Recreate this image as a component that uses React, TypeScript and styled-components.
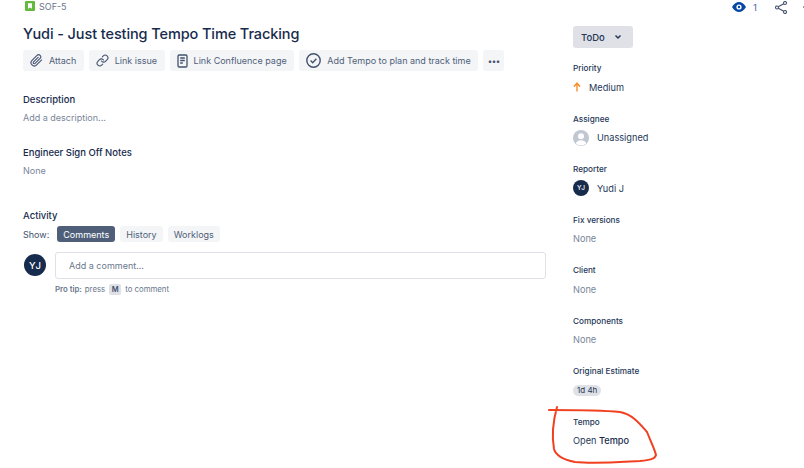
import styled, { createGlobalStyle } from "styled-components"
import { FiPaperclip, FiLink } from "react-icons/fi"

const GlobalStyle = createGlobalStyle`
  html, body {
    margin: 0;
    padding: 0;
    background: #fff;
    font-family: Inter, "Liberation Sans", sans-serif;
    color: #172b4d;
    overflow: hidden;
  }
`

const Page = styled.div`
  position: relative;
  width: 804px;
  height: 468px;
  display: grid;
  grid-template-columns: 573px 231px;
  overflow: hidden;
`

const Main = styled.main`
  padding-left: 23px;
  display: flex;
  flex-direction: column;
`

const IssueKey = styled.div`
  display: flex;
  align-items: center;
  gap: 4px;
  height: 12px;
  padding-left: 2px;
  font-size: 9px;
  color: #6b778c;
`

const Title = styled.h1`
  margin: 11px 0 0;
  font-size: 14.5px;
  line-height: 22px;
  font-weight: 500;
  letter-spacing: -0.1px;
  color: #172b4d;
  white-space: nowrap;
`

const Toolbar = styled.div`
  display: flex;
  gap: 5px;
  margin-top: 5px;
`

const ToolButton = styled.button`
  height: 21px;
  display: flex;
  align-items: center;
  gap: 6px;
  padding: 0 7.5px 0 7px;
  border: 0;
  border-radius: 3px;
  background: #f4f5f7;
  color: #505f79;
  font: 400 9px Inter, "Liberation Sans", sans-serif;
  white-space: nowrap;
  svg { flex: none; color: #42526e; }
`

const MoreButton = styled(ToolButton)`
  width: 21px;
  padding: 0;
  justify-content: center;
  color: #42526e;
  font-size: 8px;
  letter-spacing: -0.5px;
`

const Section = styled.section<{ $top: number }>`
  margin-top: ${(p) => p.$top}px;
`

const SectionLabel = styled.div`
  font-size: 9.5px;
  line-height: 12px;
  font-weight: 500;
  color: #172b4d;
`

const Muted = styled.div`
  margin-top: 6px;
  font-size: 9px;
  line-height: 12px;
  color: #7a869a;
`

const ShowRow = styled.div`
  display: flex;
  align-items: center;
  gap: 8px;
  margin-top: 4px;
  font-size: 9px;
  color: #42526e;
`

const Tabs = styled.div`
  display: flex;
  gap: 5px;
`

const Tab = styled.div<{ $active?: boolean }>`
  height: 16px;
  padding: 0 6px;
  display: flex;
  align-items: center;
  border-radius: 3px;
  font-size: 9px;
  background: ${(p) => (p.$active ? "#505f79" : "#f4f5f7")};
  color: ${(p) => (p.$active ? "#fff" : "#505f79")};
`

const CommentRow = styled.div`
  display: flex;
  align-items: flex-start;
  gap: 9px;
  margin-top: 10px;
`

const Avatar = styled.div<{ $size: number }>`
  flex: none;
  width: ${(p) => p.$size}px;
  height: ${(p) => p.$size}px;
  border-radius: 50%;
  background: #172b4d;
  color: #fff;
  display: flex;
  align-items: center;
  justify-content: center;
  font-size: ${(p) => (p.$size > 18 ? 9.5 : 6.5)}px;
  font-weight: 500;
`

const CommentAvatar = styled(Avatar)`
  margin: 2px 0 0 1px;
`

const CommentBox = styled.div`
  width: 491px;
  height: 27px;
  box-sizing: border-box;
  border: 1px solid #dfe1e6;
  border-radius: 3px;
  padding-left: 13px;
  display: flex;
  align-items: center;
  font-size: 9px;
  color: #6b778c;
`

const ProTip = styled.div`
  display: flex;
  align-items: center;
  gap: 3px;
  height: 12px;
  margin: 4px 0 0 32px;
  font-size: 7.8px;
  color: #6b778c;
  b { font-weight: 600; }
`

const Kbd = styled.span`
  display: inline-flex;
  align-items: center;
  justify-content: center;
  width: 12px;
  height: 11px;
  margin: 0 1px;
  border-radius: 2px;
  background: #dfe1e6;
  color: #42526e;
  font-size: 7.5px;
  font-weight: 600;
`

const Sidebar = styled.aside`
  position: relative;
  padding-top: 26px;
  display: flex;
  flex-direction: column;
`

const TopActions = styled.div`
  position: absolute;
  top: 0;
  left: 159px;
  display: flex;
  align-items: center;
  height: 14px;
  color: #0747a6;
  font-size: 9.5px;
`

const WatchCount = styled.span`
  margin: 0 18px 0 7px;
  color: #3f66b0;
`

const CutOffDot = styled.span`
  width: 2px;
  height: 2px;
  margin-left: 16px;
  border-radius: 50%;
  background: #6b778c;
`

const StatusButton = styled.div`
  width: 60px;
  height: 22px;
  box-sizing: border-box;
  padding-left: 8px;
  display: flex;
  align-items: center;
  gap: 9px;
  border-radius: 3px;
  background: #dfe1e6;
  font-size: 9.5px;
  font-weight: 500;
  color: #253858;
`

const Field = styled.div`
  height: 50.5px;
  box-sizing: border-box;
`

const FieldList = styled.div`
  margin-top: 14px;
`

const FieldLabel = styled.div`
  font-size: 8.2px;
  line-height: 12px;
  font-weight: 500;
  color: #253858;
`

const FieldValue = styled.div`
  display: flex;
  align-items: center;
  gap: 8px;
  height: 18px;
  margin-top: 4px;
  font-size: 9.2px;
  color: #253858;
  b { font-weight: 500; color: #172b4d; }
`

const NoneValue = styled(FieldValue)`
  color: #7a869a;
`

const Pill = styled.span`
  padding: 0 4px;
  height: 11px;
  line-height: 11px;
  border-radius: 6px;
  background: #dfe1e6;
  font-size: 8px;
`

const Scribble = styled.svg`
  position: absolute;
  inset: 0;
  pointer-events: none;
`

function StoryIcon() {
  return (
    <svg width="10" height="10" viewBox="0 0 10 10">
      <rect width="10" height="10" rx="1" fill="#63ba3c" />
      <path d="M3 2.2h4v5.6L5 6.4 3 7.8z" fill="#fff" />
    </svg>
  )
}

function PageIcon() {
  return (
    <svg width="11" height="14" viewBox="0 0 11 14" fill="none" stroke="currentColor" strokeWidth="1.3">
      <rect x="1" y="1" width="9" height="12" rx="1.2" />
      <path d="M3.2 4h4.6M3.2 6.5h4.6M3.2 9h2.6" />
    </svg>
  )
}

function CheckCircleIcon() {
  return (
    <svg width="15" height="15" viewBox="0 0 15 15" fill="none" stroke="currentColor" strokeWidth="1.4">
      <circle cx="7.5" cy="7.5" r="6.7" />
      <path d="M4.6 7.6l2.1 2.1 3.7-3.9" />
    </svg>
  )
}

function EyeIcon() {
  return (
    <svg width="14" height="10" viewBox="0 0 14 10">
      <path d="M0 5C2 1.500 4.500 0 7 0s5 1.500 7 5c-2 3.500-4.500 5-7 5S2 8.500 0 5z" fill="#0747a6" />
      <circle cx="7" cy="5" r="2.600" fill="#fff" />
      <circle cx="7" cy="5" r="1.200" fill="#0747a6" />
    </svg>
  )
}

function ShareIcon() {
  return (
    <svg width="12" height="13" viewBox="0 0 12 13" fill="none" stroke="#42526e" strokeWidth="1.1">
      <circle cx="2" cy="6.500" r="1.500" />
      <circle cx="10" cy="2" r="1.500" />
      <circle cx="10" cy="11" r="1.500" />
      <path d="M3.300 5.700l5.400-3M3.300 7.300l5.400 3" />
    </svg>
  )
}

function ChevronIcon() {
  return (
    <svg width="8" height="6" viewBox="0 0 8 6" fill="none" stroke="#253858" strokeWidth="1.500">
      <path d="M1.500 1.500L4 4l2.500-2.500" />
    </svg>
  )
}

function ArrowUpIcon() {
  return (
    <svg width="8" height="10" viewBox="0 0 9 10" preserveAspectRatio="none" fill="none" stroke="#f79232" strokeWidth="1.600">
      <path d="M4.500 9.500V1.200M1 4.600l3.500-3.400L8 4.600" />
    </svg>
  )
}

function UnassignedIcon() {
  return (
    <svg width="16" height="16" viewBox="0 0 16 16">
      <circle cx="8" cy="8" r="8" fill="#c1c7d0" />
      <circle cx="8" cy="6.200" r="3" fill="#fff" />
      <path d="M2.800 13.500C3.500 11 5.500 10.300 8 10.300s4.500.7 5.200 3.200A8 8 0 0 1 2.800 13.500z" fill="#fff" />
    </svg>
  )
}

const plainFields = ["Fix versions", "Client", "Components"]

export default function App() {
  return (
    <Page>
      <GlobalStyle />
      <Main>
        <IssueKey>
          <StoryIcon />
          SOF-5
        </IssueKey>
        <Title>Yudi - Just testing Tempo Time Tracking</Title>
        <Toolbar>
          <ToolButton><FiPaperclip size={13} />Attach</ToolButton>
          <ToolButton><FiLink size={13} />Link issue</ToolButton>
          <ToolButton><PageIcon />Link Confluence page</ToolButton>
          <ToolButton><CheckCircleIcon />Add Tempo to plan and track time</ToolButton>
          <MoreButton>•••</MoreButton>
        </Toolbar>
        <Section $top={23}>
          <SectionLabel>Description</SectionLabel>
          <Muted>Add a description...</Muted>
        </Section>
        <Section $top={23}>
          <SectionLabel>Engineer Sign Off Notes</SectionLabel>
          <Muted>None</Muted>
        </Section>
        <Section $top={33}>
          <SectionLabel>Activity</SectionLabel>
          <ShowRow>
            Show:
            <Tabs>
              <Tab $active>Comments</Tab>
              <Tab>History</Tab>
              <Tab>Worklogs</Tab>
            </Tabs>
          </ShowRow>
          <CommentRow>
            <CommentAvatar $size={22}>YJ</CommentAvatar>
            <CommentBox>Add a comment...</CommentBox>
          </CommentRow>
          <ProTip>
            <b>Pro tip:</b> press <Kbd>M</Kbd> to comment
          </ProTip>
        </Section>
      </Main>
      <Sidebar>
        <TopActions>
          <EyeIcon />
          <WatchCount>1</WatchCount>
          <ShareIcon />
          <CutOffDot />
        </TopActions>
        <StatusButton>
          ToDo
          <ChevronIcon />
        </StatusButton>
        <FieldList>
          <Field>
            <FieldLabel>Priority</FieldLabel>
            <FieldValue><ArrowUpIcon />Medium</FieldValue>
          </Field>
          <Field>
            <FieldLabel>Assignee</FieldLabel>
            <FieldValue><UnassignedIcon />Unassigned</FieldValue>
          </Field>
          <Field>
            <FieldLabel>Reporter</FieldLabel>
            <FieldValue><Avatar $size={16}>YJ</Avatar>Yudi J</FieldValue>
          </Field>
          {plainFields.map((name) => (
            <Field key={name}>
              <FieldLabel>{name}</FieldLabel>
              <NoneValue>None</NoneValue>
            </Field>
          ))}
          <Field>
            <FieldLabel>Original Estimate</FieldLabel>
            <FieldValue><Pill>1d 4h</Pill></FieldValue>
          </Field>
          <Field>
            <FieldLabel>Tempo</FieldLabel>
            <FieldValue><span>Open <b>Tempo</b></span></FieldValue>
          </Field>
        </FieldList>
      </Sidebar>
      <Scribble width="804" height="468" viewBox="0 0 804 468" fill="none">
        <path
          d="M549 410C560 410 600 410 620 412C632 414 640 424 647 432C651 442 655 450 656 455C655 459 650 460 640 461C620 462 595 464 575 462C565 460 556 456 554 449C552 438 552 425 557 407"
          stroke="#f0401f"
          strokeWidth="2"
          strokeLinecap="round"
          strokeLinejoin="round"
        />
      </Scribble>
    </Page>
  )
}
